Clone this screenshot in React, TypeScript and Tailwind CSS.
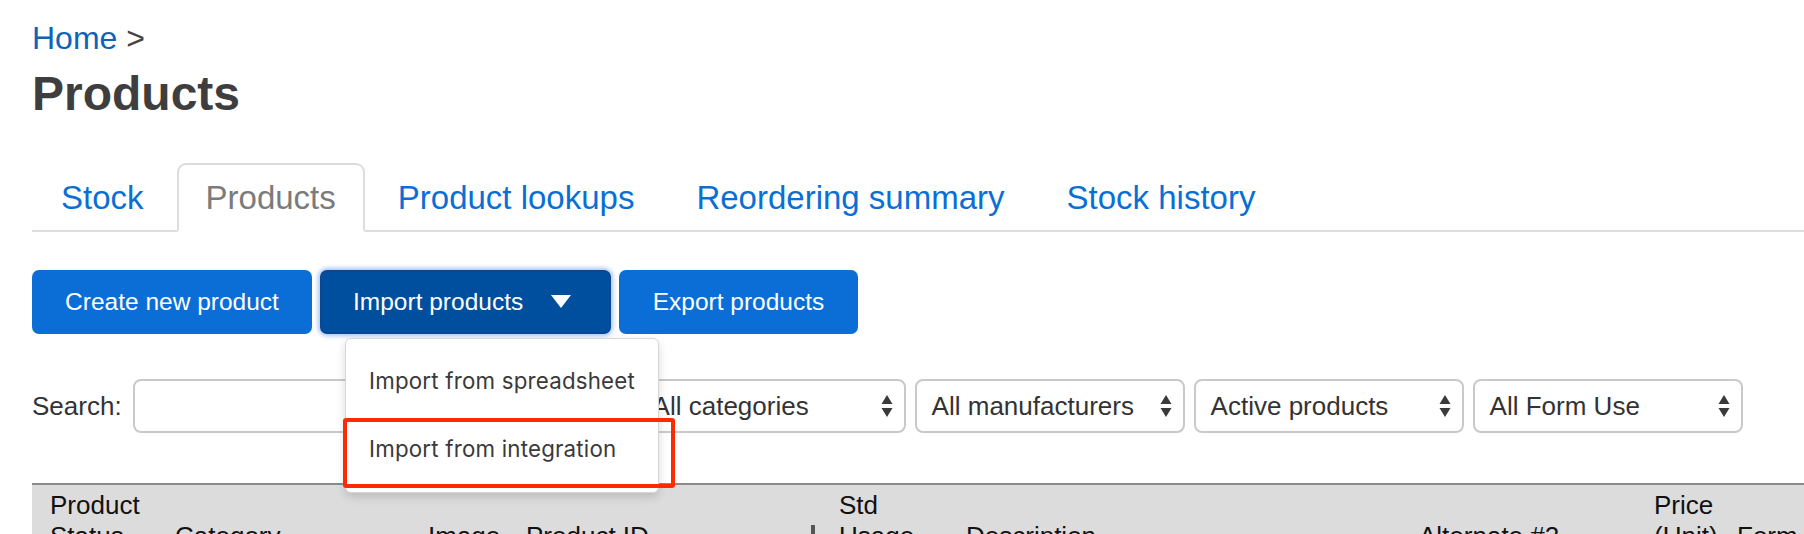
import { useState } from "react"

const tabs = ["Stock", "Products", "Product lookups", "Reordering summary", "Stock history"]
const filters = ["All categories", "All manufacturers", "Active products", "All Form Use"]

const SortArrows = () => (
  <svg width="12" height="24" viewBox="0 0 12 24" className="shrink-0">
    <path d="M6 1 L11.5 10 L0.5 10 Z" fill="#3a3a3a" />
    <path d="M6 23 L11.5 14 L0.5 14 Z" fill="#3a3a3a" />
  </svg>
)

const App: React.FC = () => {
  const [active] = useState("Products")

  return (
    <div
      className="relative min-h-[534px] overflow-hidden bg-white pl-[32px] pt-[19px]"
      style={{ fontFamily: '"Liberation Sans", Arial, sans-serif' }}
    >
      {/* Breadcrumb and title */}
      <div className="text-[32px] leading-[38px] text-[#444]">
        <a className="text-[#0e63b9]">Home</a> &gt;
      </div>
      <h1 className="mt-[9px] text-[48px] font-bold leading-[56px] text-[#3e3e3e]">Products</h1>

      {/* Tabs */}
      <ul className="mt-[41px] flex border-b-2 border-[#dddddd]">
        {tabs.map((t) => (
          <li key={t} className="-mb-[2px] mr-[4px]">
            <a
              className={
                t === active
                  ? "block rounded-t-[9px] border-2 border-[#dddddd] border-b-white bg-white px-[27px] py-[14px] text-[33px] leading-[37px] text-[#7b7b7b]"
                  : "block border-2 border-transparent px-[27px] py-[14px] text-[33px] leading-[37px] text-[#0a6fd5]"
              }
            >
              {t}
            </a>
          </li>
        ))}
      </ul>

      {/* Action buttons */}
      <div className="mt-[38px] flex gap-[8px]">
        <button className="h-[64px] w-[280px] rounded-[7px] bg-[#0a6ed6] text-[24.5px] text-white">
          Create new product
        </button>
        <div className="relative">
          <button className="flex h-[64px] w-[291px] items-center rounded-[7px] border-2 border-[#0a4790] bg-[#004f9e] pl-[31px] text-[24.5px] text-white shadow-[0_0_4px_2px_rgba(90,150,235,0.55)]">
            Import products
            <svg width="20" height="14" viewBox="0 0 20 14" className="ml-[28px]">
              <path d="M0 0 L20 0 L10 13 Z" fill="#ffffff" />
            </svg>
          </button>
          {/* Dropdown menu */}
          <div
            className="absolute left-[25px] top-[68px] z-10 w-[314px] rounded-[6px] border border-[#d6d6d6] bg-white pb-[9px] pt-[8px] text-[#3a3a3a] shadow-[0_4px_10px_rgba(0,0,0,0.15)]"
            style={{ fontFamily: 'Inter, "Noto Sans", sans-serif' }}
          >
            <div className="flex h-[68px] items-center pl-[23px] text-[22.3px] tracking-[0.2px]">Import from spreadsheet</div>
            <div className="flex h-[68px] items-center pl-[23px] text-[22.3px] tracking-[0.2px]">Import from integration</div>
          </div>
        </div>
        <button className="h-[64px] w-[239px] rounded-[7px] bg-[#0a6ed6] text-[24.5px] text-white">
          Export products
        </button>
      </div>

      {/* Search and filters */}
      <div className="mt-[45px] flex items-center">
        <label className="text-[26px] text-[#333]">Search:</label>
        <div className="ml-[11px] h-[54px] w-[494px] rounded-[8px] border-2 border-[#c9c9c9] bg-white"></div>
        <div className="ml-[9px] flex gap-[9px]">
          {filters.map((f) => (
            <div
              key={f}
              className="flex h-[54px] w-[270px] items-center justify-between rounded-[8px] border-2 border-[#c9c9c9] bg-white pl-[15px] pr-[11px] text-[26px] text-[#333]"
            >
              <span>{f}</span>
              <SortArrows />
            </div>
          ))}
        </div>
      </div>

      {/* Table header */}
      <div className="mt-[50px] w-[1790px] border-t-2 border-[#8a8a8a] bg-[#dcdcdc] pt-[5px] text-[26px] leading-[31px] text-[#111]">
        <div className="grid grid-cols-[125px_253px_98px_313px_127px_453px_235px_83px_1fr]">
          <div className="pl-[18px]">Product</div>
          <div />
          <div />
          <div />
          <div className="pl-[18px]">Std</div>
          <div />
          <div />
          <div className="pl-[18px]">Price</div>
          <div />
          <div className="pl-[18px]">Status</div>
          <div className="pl-[18px]">Category</div>
          <div className="pl-[18px]">Image</div>
          <div className="flex pl-[18px]">
            <span>Product ID</span>
            <span className="ml-auto mr-[6px] mt-[4px] h-[28px] w-[4px] bg-[#555]" />
          </div>
          <div className="pl-[18px]">Usage</div>
          <div className="pl-[18px]">Description</div>
          <div className="pl-[18px]">Alternate #2</div>
          <div className="pl-[18px]">(Unit)</div>
          <div className="pl-[18px]">Form</div>
        </div>
      </div>

      {/* Annotation highlight */}
      <div className="pointer-events-none absolute left-[343px] top-[418px] z-20 h-[70px] w-[332px] rounded-[3px] border-[4px] border-[#ff2a00]" />
    </div>
  )
}

export default App
